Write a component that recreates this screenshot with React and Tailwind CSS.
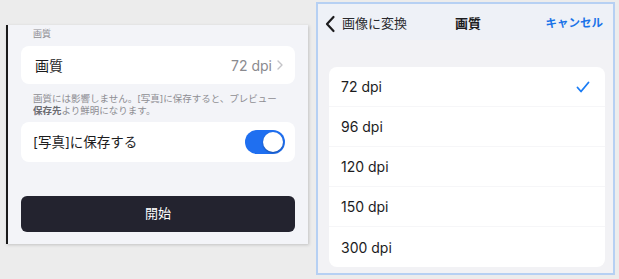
import React from "react";

const font = { fontFamily: '"Inter","Noto Sans CJK JP",sans-serif' };

function Toggle() {
  return (
    <div className="w-[40px] h-[24px] rounded-full bg-[#1f6ff0] relative">
      <div className="absolute right-[2px] top-[2px] w-[20px] h-[20px] rounded-full bg-white shadow-[0_1px_2px_rgba(0,0,0,0.3)]" />
    </div>
  );
}

export default function App() {
  const rows = ["72 dpi", "96 dpi", "120 dpi", "150 dpi", "300 dpi"];
  return (
    <div className="w-[619px] h-[279px] bg-[#ececec] flex items-start overflow-hidden" style={font}>
      {/* Left panel */}
      <div className="ml-[6px] mt-[25px] w-[302px] h-[219px] bg-[#f3f4f8] border-l-2 border-[#1a1a1a] flex flex-col shadow-[1px_1px_3px_rgba(0,0,0,0.18)]">
        <div className="pl-[25px] pt-[3px] h-[15px] text-[9px] leading-[12px] text-[#8e8e93]">画質</div>
        <div className="mx-[13px] mt-[6px] h-[38px] bg-white rounded-[8px] flex items-center justify-between pl-[14px] pr-[12px]">
          <span className="text-[14px] text-[#1c1c1e]">画質</span>
          <span className="flex items-center gap-[5px] text-[14px] text-[#8a8a8f]">
            72 dpi
            <svg width="6" height="10" viewBox="0 0 6 10"><path d="M1 1l4 4-4 4" fill="none" stroke="#c4c4c8" strokeWidth="1.4" strokeLinecap="round" strokeLinejoin="round" /></svg>
          </span>
        </div>
        <div className="mt-[9px] pl-[25px] pr-[12px] text-[9.5px] leading-[12px] text-[#8e8e93]">
          <div>画質には影響しません。[写真]に保存すると、プレビュー</div>
          <div><span className="text-[#6b6b70] font-semibold">保存先</span>より鮮明になります。</div>
        </div>
        <div className="mx-[13px] mt-[5px] h-[40px] bg-white rounded-[8px] flex items-center justify-between pl-[12px] pr-[10px]">
          <span className="text-[13.5px] text-[#1c1c1e]">[写真]に保存する</span>
          <Toggle />
        </div>
        <div className="mx-[13px] mt-[34px] h-[36px] bg-[#23232f] rounded-[6px] flex items-center justify-center text-white text-[13px]">
          開始
        </div>
      </div>

      {/* Right panel */}
      <div className="ml-[8px] mt-[2px] w-[299px] h-[273px] border-2 border-[#b6d0f3] bg-[#f2f2f5] flex flex-col">
        <div className="h-[36px] pt-[3px] bg-[#eef1f7] flex items-center relative px-[4px]">
          <svg width="12" height="18" viewBox="0 0 12 18" className="ml-[2px]"><path d="M9.5 2L3 9l6.5 7" fill="none" stroke="#1c1c1e" strokeWidth="2.2" strokeLinecap="round" strokeLinejoin="round" /></svg>
          <span className="ml-[6px] text-[13px] text-[#2a2a2e]">画像に変換</span>
          <span className="absolute left-[137px] text-[13px] font-bold text-[#1c1c1e]">画質</span>
          <span className="ml-auto mr-[6px] text-[11.5px] font-bold text-[#1a73e8]">キャンセル</span>
        </div>
        <div className="ml-[11px] mr-[8px] mt-[27px] bg-white rounded-[8px] flex flex-col">
          {rows.map((r, i) => (
            <div key={r} className={`h-[40px] flex items-center justify-between pl-[12px] pr-[15px] ${i < rows.length - 1 ? "border-b border-[#f6f6f8]" : ""}`}>
              <span className="text-[14px] text-[#1c1c1e]">{r}</span>
              {i === 0 && (
                <svg width="14" height="12" viewBox="0 0 14 12"><path d="M1.5 6.5l3.5 4 7.5-9" fill="none" stroke="#1a7cf5" strokeWidth="1.8" strokeLinecap="round" strokeLinejoin="round" /></svg>
              )}
            </div>
          ))}
        </div>
      </div>
    </div>
  );
}
